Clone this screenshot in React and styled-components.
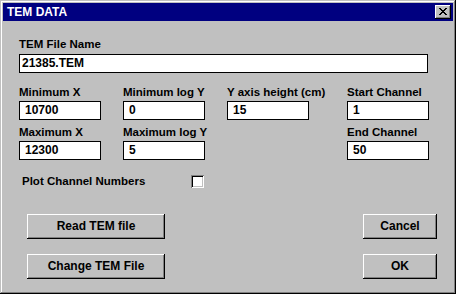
import React from 'react';
import styled, { createGlobalStyle } from 'styled-components';

const GlobalStyle = createGlobalStyle`
    html, body { margin : 0; padding : 0; background : #c0c0c0; }
    * { box-sizing : border-box; }
`

// 입력 필드 데이터
const fields = [
    { label : 'Minimum X', value : '10700' },
    { label : 'Minimum log Y', value : '0' },
    { label : 'Y axis height (cm)', value : '15' },
    { label : 'Start Channel', value : '1' },
    { label : 'Maximum X', value : '12300' },
    { label : 'Maximum log Y', value : '5' },
    null,
    { label : 'End Channel', value : '50' },
];

const CloseIcon = () => (
    <svg width="8" height="7" viewBox="0 0 8 7" shapeRendering="crispEdges">
        <path d="M0 0h2v1h-2zM6 0h2v1h-2zM1 1h2v1h-2zM5 1h2v1h-2zM2 2h4v1h-4zM3 3h2v1h-2zM2 4h4v1h-4zM1 5h2v1h-2zM5 5h2v1h-2zM0 6h2v1h-2zM6 6h2v1h-2z" fill="#000"/>
    </svg>
);

const App = () => {
    return (
        <>
            <GlobalStyle />
            <Window>
                <TitleBar>
                    <TitleText>TEM DATA</TitleText>
                    <CloseButton><CloseIcon /></CloseButton>
                </TitleBar>

                <Body>
                    {/* 파일 이름 */}
                    <Label>TEM File Name</Label>
                    <TextField $wide defaultValue="21385.TEM" readOnly />

                    {/* 값 입력 그리드 */}
                    <FieldGrid>
                        {fields.map((f, idx) => (
                            f ?
                            <FieldCell key={idx}>
                                <Label>{f.label}</Label>
                                <TextField defaultValue={f.value} readOnly />
                            </FieldCell> :
                            <div key={idx} />
                        ))}
                    </FieldGrid>

                    {/* 체크박스 */}
                    <CheckRow>
                        <CheckLabel>Plot Channel Numbers</CheckLabel>
                        <CheckBox />
                    </CheckRow>

                    {/* 버튼 */}
                    <ButtonArea>
                        <ButtonRow>
                            <Button $width={138}>Read TEM file</Button>
                            <Button $width={74}>Cancel</Button>
                        </ButtonRow>
                        <ButtonRow>
                            <Button $width={138}>Change TEM File</Button>
                            <Button $width={74}>OK</Button>
                        </ButtonRow>
                    </ButtonArea>
                </Body>
            </Window>
        </>
    );
};

// 창 프레임
const Window = styled.div`
    display : flex; flex-direction : column;
    width : 456px; height : 294px;
    padding : 3px;
    background : #c0c0c0;
    box-shadow : inset -1px -1px #000, inset 1px 1px #c0c0c0,
                 inset -2px -2px #808080, inset 2px 2px #fff;
    font-family : "Liberation Sans", Arial, sans-serif;
    font-weight : bold;
    color : #000;
`

const TitleBar = styled.div`
    display : flex;
    height : 18px;
    padding : 0 2px 0 4px;
    background : #000080;
    align-items : center; justify-content : space-between;
`
const TitleText = styled.div`
    font-size : 12px; line-height : 18px;
    color : #fff;
`
const CloseButton = styled.div`
    display : flex;
    width : 16px; height : 14px;
    background : #c0c0c0;
    box-shadow : inset -1px -1px #000, inset 1px 1px #fff, inset -2px -2px #808080;
    justify-content : center; align-items : center;
    padding-bottom : 1px;
`

const Body = styled.div`
    display : flex; flex-direction : column;
    flex : 1;
    padding : 16px 16px 0 16px;
`

const Label = styled.div`
    font-size : 11.5px; line-height : 14px;
    margin-bottom : 2px;
    white-space : nowrap;
`

const TextField = styled.input`
    display : block;
    width : ${p => p.$wide ? '409px' : '82px'};
    height : 19px;
    margin : ${p => p.$wide ? '1px 0 0 0' : '0'};
    padding : ${p => p.$wide ? '0 0 1px 2px' : '0 0 1px 5px'};
    border : 1px solid #000;
    background : #fff;
    font-family : inherit; font-weight : bold;
    font-size : 12px; color : #000;
    outline : none;
`

const FieldGrid = styled.div`
    display : grid;
    grid-template-columns : 104px 104px 120px 82px;
    row-gap : 5px;
    margin-top : 12px;
`
const FieldCell = styled.div`
    display : flex; flex-direction : column;
`

const CheckRow = styled.div`
    display : flex;
    height : 14px;
    margin-top : 14px;
    padding-left : 3px;
    align-items : center;
`
const CheckLabel = styled.div`
    width : 169px;
    font-size : 11.5px; line-height : 14px;
`
const CheckBox = styled.div`
    width : 13px; height : 13px;
    background : #fff;
    box-shadow : inset 1px 1px #808080, inset -1px -1px #fff,
                 inset 2px 2px #000, inset -2px -2px #c0c0c0;
`

const ButtonArea = styled.div`
    display : flex; flex-direction : column;
    gap : 15px;
    margin-top : 26px;
    padding-left : 8px;
`
const ButtonRow = styled.div`
    display : flex;
    justify-content : space-between;
`
const Button = styled.div`
    display : flex;
    width : ${p => p.$width}px; height : 25px;
    background : #c0c0c0;
    box-shadow : inset -1px -1px #000, inset 1px 1px #fff, inset -2px -2px #808080;
    justify-content : center; align-items : center;
    font-size : 12px;
    padding-bottom : 1px;
`

export default App;
